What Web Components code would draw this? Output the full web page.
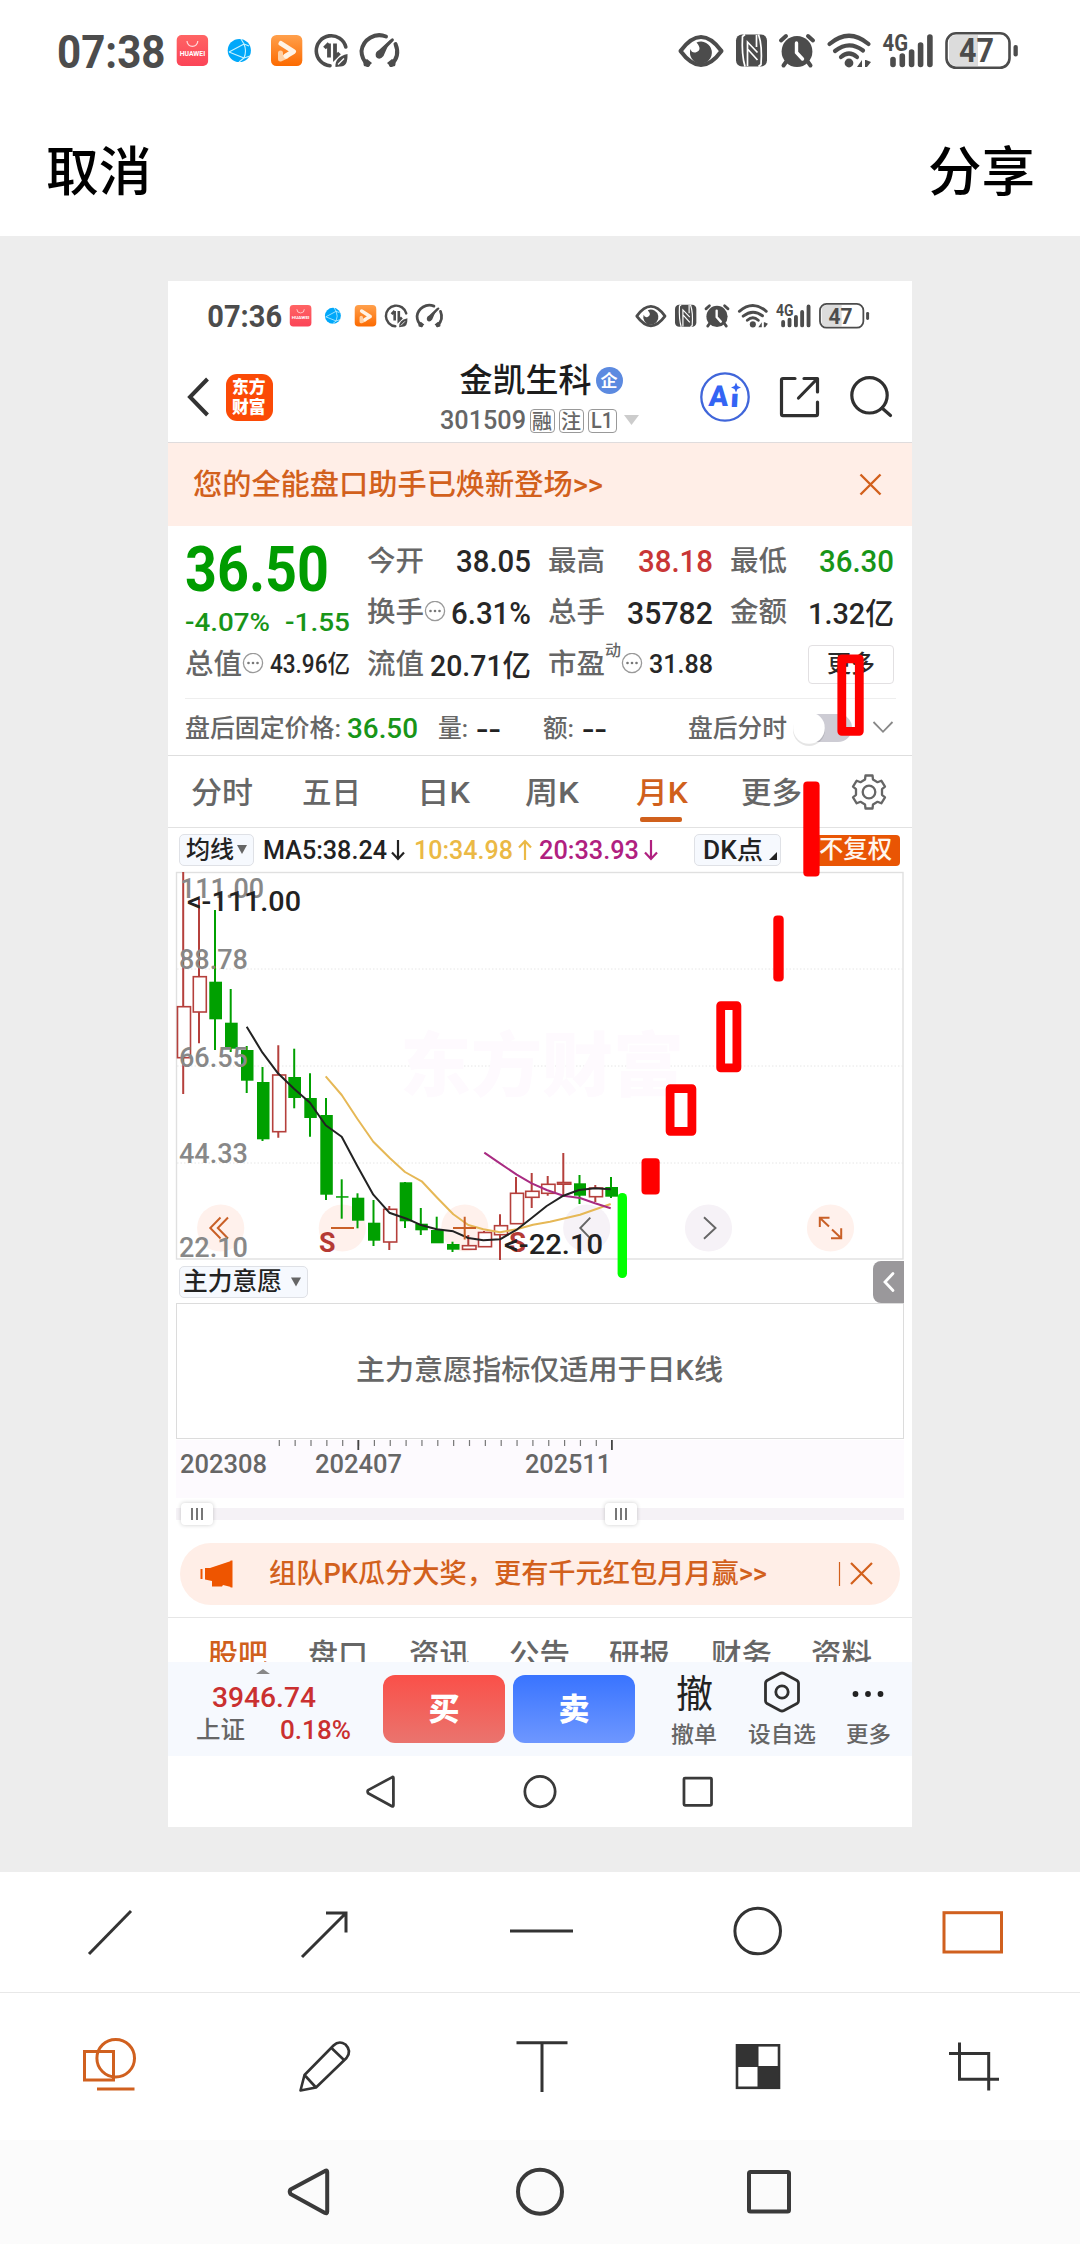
<!DOCTYPE html>
<html lang="zh-CN">
<head>
<meta charset="utf-8">
<title>截图编辑</title>
<style>
html,body{margin:0;padding:0;background:#ededed}
body{width:1080px;height:2244px;overflow:hidden;font-family:Roboto,"Noto Sans CJK SC",sans-serif;font-weight:500}
</style>
</head>
<body>
<shot-editor></shot-editor>
<script>
function define(name, html, after){
  const t=document.createElement('template'); t.innerHTML=html;
  customElements.define(name, class extends HTMLElement{
    constructor(){super(); this.attachShadow({mode:'open'}).appendChild(t.content.cloneNode(true));}
    connectedCallback(){ if(after) after.call(this,this.shadowRoot); }
  });
}

/* single line of text condensed or widened to w pixels; dy nudges the baseline */
define('fit-text', `<style>:host{display:block;flex:none;line-height:1.3;white-space:nowrap}span{display:inline-block;transform-origin:0 50%}</style><span><slot></slot></span>`,
function(r){
  const w=+this.getAttribute('w'), s=r.querySelector('span'), dy=this.getAttribute('dy')||'1.3';
  this.style.width=w+'px'; this.style.fontSize=this.getAttribute('s')+'px';
  s.style.transform='translateY('+dy+'px) scaleX('+(w/s.getBoundingClientRect().width)+')';
});

define('status-bar', `<style>:host{display:block}svg{display:block;width:100%;height:auto}</style>
<svg viewBox="0 0 1080 100" fill="#4c4c4c" font-family="Roboto,sans-serif">
<defs><linearGradient id="o" x2="0" y2="1"><stop stop-color="#ffa04c"/><stop offset="1" stop-color="#fc6a00"/></linearGradient>
<linearGradient id="h" x2="0" y2="1"><stop stop-color="#ff6464"/><stop offset="1" stop-color="#fb4457"/></linearGradient></defs>
<text class="t" x="57" y="67.5" font-size="45.5" font-weight="700" textLength="108.500" lengthAdjust="spacingAndGlyphs"></text>
<rect x="176.7" y="35" width="31.4" height="31" rx="5" fill="url(#h)"/>
<path d="M187 41a5.4 5.4 0 0 0 10.8 0" fill="none" stroke="#ffd9d9" stroke-width="1.2"/>
<text x="179.7" y="55.8" font-size="6.4" font-weight="700" fill="#fff" textLength="25.5" lengthAdjust="spacingAndGlyphs">HUAWEI</text>
<circle cx="239.3" cy="50.5" r="11.6" fill="#00a8fa"/>
<path d="M229 52L244 44Q247 51 244 58L229 52M244 44L241 39M244 58L239 62M244 44L249 46M244 58L250 56" fill="none" stroke="#c8f2ff" stroke-width="1.1"/>
<rect x="271" y="35" width="31.3" height="31" rx="5.5" fill="url(#o)"/>
<path d="M280.5 53V59L286 56.500" fill="none" stroke="#ffd0a4" stroke-width="5" stroke-linejoin="round" stroke-linecap="round"/>
<path d="M281 43.5L293.500 51.5L286 56" fill="none" stroke="#fff3e6" stroke-width="5" stroke-linejoin="round" stroke-linecap="round"/>
<g fill="none" stroke="#4c4c4c" stroke-width="3.6" stroke-linecap="round">
<path d="M345.8 47A15 15 0 1 0 330 65.7"/>
<path d="M329 43.5V57.5M329 43.5L324.5 48M335 43.5V57.5L339.5 53" stroke-width="3.8" stroke-linecap="butt"/>
<path d="M368 65Q361.5 59 361.5 51A18 18 0 0 1 386 36.5M395.5 44Q400.5 56 391 65" stroke-width="4"/>
<path d="M379.5 53L392.3 40" stroke-width="3.2"/></g>
<path d="M347.5 54Q348 67 340 66.5L335.5 67Q334.5 57 347.5 54zM391 39L383.5 56Q379.5 61 376 57Q374.5 52 379 50zM364 66Q362 62 367 59L372 63L368 67zM395 66Q397 62 392 59L387 63L391 67z"/>
<path d="M338 64.5L344 58.5" stroke="#fff" stroke-width="1.2"/>
<path d="M680.5 51Q701 23 721.5 51Q701 79 680.5 51z" fill="none" stroke="#4c4c4c" stroke-width="4" stroke-linejoin="round"/>
<path d="M696.5 42.5A11 11 0 1 1 690.5 49Q691.5 53 695.5 52.5Q703 50 696.5 42.5z"/>
<rect x="736" y="34.5" width="31" height="32" rx="6"/>
<path d="M745 66.500Q741.500 55 742.500 36.500L745 34.500M758.500 34.500Q762.500 46 761 64.500L758.500 66.500M747.500 66V42L757.500 52.500M756.500 35V47M748 49.500L757.500 60" fill="none" stroke="#fff" stroke-width="1.700"/>
<circle cx="797" cy="51.5" r="15.4"/>
<path d="M796.5 43V52.5L802.5 59" fill="none" stroke="#fff" stroke-width="3.4" stroke-linecap="round"/>
<path d="M781 40.5L786 36M813 40.5L808 36M786 62L783.5 65.5M808 62L810.5 65.5" stroke="#4c4c4c" stroke-width="4" stroke-linecap="round"/>
<g fill="none" stroke="#4c4c4c" stroke-width="4.2" stroke-linecap="round"><path d="M829.5 44Q849 27.5 868.5 44"/><path d="M835 51Q849 40 863 50.5"/><path d="M841 57Q849 50 857 57"/></g>
<circle cx="849" cy="63" r="4.4"/><path d="M862 60V67H857zM866 60L871 62L867 67H865V60z"/>
<text x="882.5" y="51" font-size="23" font-weight="700" textLength="25.5" lengthAdjust="spacingAndGlyphs">4G</text>
<g stroke="#4c4c4c" stroke-width="5.6" stroke-linecap="round"><path d="M893 59.5V64.5M902.3 56V64.5M911.6 52V64.5M920.6 45V64.5M929.9 37V64.5"/></g>
<path d="M956 35H978V66H956Q949 66 949 59V42Q949 35 956 35z" fill="#dcdcdc"/>
<rect x="946.5" y="33.3" width="63" height="34.5" rx="9.5" fill="none" stroke="#4c4c4c" stroke-width="2.6"/>
<rect x="1013.5" y="45" width="4.3" height="11.5" rx="2"/>
<text x="959" y="62" font-size="32.5" font-weight="700" textLength="35" lengthAdjust="spacingAndGlyphs">47</text>
</svg>`, function(r){r.querySelector('.t').textContent=this.getAttribute('time');});

define('nav-bar', `<style>:host{display:block}svg{display:block;width:100%;height:auto}</style>
<svg viewBox="0 0 1080 104" fill="none" stroke="#3a3a3a" stroke-width="4" stroke-linejoin="round">
<path d="M290.5 49.5Q289 51.5 290.5 54L325 73Q327.2 74 327.2 71.5V32Q327.2 29.5 325 31z"/><circle cx="540" cy="51.7" r="22"/><rect x="749" y="32" width="40" height="39.5" rx="1.5"/></svg>`);

define('app-header', `<style>:host{display:flex;height:93px;box-sizing:border-box;border-bottom:1.5px solid #dfdcdd}
svg{display:block;flex:none}.side{width:232px;display:flex;align-items:center;padding:2px 0 0 57.5px;box-sizing:border-box}
.logo{width:47px;height:47px;border-radius:11px;background:#fb4a06;color:#fff;font-weight:900;display:flex;flex-direction:column;align-items:center;justify-content:center;line-height:1}
.logo fit-text{line-height:20.5px}
.back{margin-left:-39px;margin-right:17px}
.mid{width:280px;display:flex;flex-direction:column;align-items:center}
.l1,.l2{display:flex;align-items:center}.l1{color:#1c1c1c;height:45px;margin:8px 0 0 2px;gap:4px}.l2{gap:4px;color:#666;height:32px;margin:1px 1px 0 0}
.ent{width:27px;height:27px;border-radius:50%;background:#5c8ae0;color:#fff;display:flex;align-items:center;justify-content:center;font-weight:700}
.tag{border:1.3px solid #999;border-radius:4px;height:22.5px;display:flex;align-items:center;justify-content:center;width:23px;margin-top:2px}
.tag.w{width:27px}</style>
<div class="side"><svg class="back" width="22" height="40" viewBox="0 0 22 40" fill="none" stroke="#333" stroke-width="4"><path d="M20.5 2L3 20L20.5 38"/></svg>
<div class="logo"><fit-text w="33.5" s="17" dy="0.3">东方</fit-text><fit-text w="33.5" s="17" dy="0.3">财富</fit-text></div></div>
<div class="mid"><div class="l1"><fit-text w="132" s="33">金凯生科</fit-text><div class="ent"><fit-text w="17" s="17" dy="0.5">企</fit-text></div></div>
<div class="l2"><fit-text w="86" s="25.5">301509</fit-text><div class="tag"><fit-text w="20" s="20" dy="0.5">融</fit-text></div><div class="tag"><fit-text w="20" s="20" dy="0.5">注</fit-text></div><div class="tag w"><fit-text w="22" s="22.5" dy="0.3">L1</fit-text></div>
<svg width="19" height="12"><path d="M3 1H18L10.5 11z" fill="#ccc"/></svg></div></div>
<svg width="232" height="91" viewBox="680 350 232 91" fill="none" stroke="#303030" stroke-width="3.2" stroke-linecap="round" stroke-linejoin="round">
<circle cx="725" cy="397" r="23.7" stroke="#4066da" stroke-width="2.3"/>
<g fill="#3464f4" stroke="none" font-family="Roboto,sans-serif" font-weight="900"><text x="708.5" y="406.5" font-size="29" textLength="19.5" lengthAdjust="spacingAndGlyphs" transform="skewX(-4) translate(28.3)">A</text><text x="730.5" y="406.8" font-size="25" textLength="9" lengthAdjust="spacingAndGlyphs" transform="skewX(-3) translate(20.5)">ı</text><path d="M736 382.5L737.5 386L741 387.5L737.5 389L736 392.5L734.5 389L731 387.5L734.5 386z"/></g>
<path d="M795 378.5H783Q781.5 378.5 781.5 380V414Q781.5 415.7 783 415.7H816Q817.5 415.7 817.5 414V402M804 378.5H817.5V392M817 379L798.5 398"/>
<circle cx="869.5" cy="395.3" r="17.7"/><path d="M882 408L890.5 415.5"/></svg>`);

define('info-icon', `<style>:host{display:block;flex:none}svg{display:block}</style><svg width="22" height="22" viewBox="0 0 22 22"><circle cx="11" cy="10" r="9.6" fill="none" stroke="#999" stroke-width="1.3"/><g fill="#777"><circle cx="6.5" cy="10" r="1.3"/><circle cx="11" cy="10" r="1.3"/><circle cx="15.5" cy="10" r="1.3"/></g></svg>`);

define('quote-panel', `<style>:host{display:block;height:230px;border-bottom:1.5px solid #dedede;box-sizing:border-box;color:#272727}
.g{display:grid;grid-template-columns:164.5px 164.5px 164.5px 164.5px;column-gap:17px;grid-template-rows:52px 51px 52px;padding:9px 16px 0 17px;height:155px}
.c{display:flex;align-items:center;justify-content:space-between}.c>:first-child{color:#666}
.p{grid-row:1/3;color:#009c00;display:flex;flex-direction:column}.p .big{font-weight:700;height:68px;margin-top:0;line-height:68px}.p .r{display:flex;justify-content:space-between;margin-top:1px;color:#189518;height:34px;align-items:center}
.k{display:flex;align-items:center;color:#666}.sup{margin:-28px 0 0 0}
.b{border:1px solid #e2e0e2;border-radius:4px;width:84px;height:37px;margin-left:auto;display:flex;align-items:center;justify-content:center;color:#2a2a2a!important}
.d{height:1px;background:#eee;margin:8px 16px 0 17px}
.f{display:flex;align-items:center;height:58px;padding-left:17px;color:#666}.gr{color:#189518}.rd{color:#c83636}
.dash{color:#222}svg{display:block;overflow:visible}</style>
<div class="g"><div class="p"><fit-text class="big" w="144" s="62.5">36.50</fit-text><div class="r"><fit-text w="85" s="26.5">-4.07%</fit-text><fit-text w="65" s="26.5">-1.55</fit-text></div></div>
<div class="c"><fit-text w="57" s="28">今开</fit-text><fit-text w="75" s="30.5">38.05</fit-text></div>
<div class="c"><fit-text w="57" s="28">最高</fit-text><fit-text class="rd" w="75" s="30.5">38.18</fit-text></div>
<div class="c"><fit-text w="57" s="28">最低</fit-text><fit-text class="gr" w="75" s="30.5">36.30</fit-text></div>
<div class="c"><div class="k"><fit-text w="57" s="28">换手</fit-text><info-icon></info-icon></div><fit-text w="80" s="30.5">6.31%</fit-text></div>
<div class="c"><fit-text w="57" s="28">总手</fit-text><fit-text w="86" s="30.5">35782</fit-text></div>
<div class="c"><fit-text w="57" s="28">金额</fit-text><fit-text w="86" s="30">1.32亿</fit-text></div>
<div class="c"><div class="k"><fit-text w="57" s="28">总值</fit-text><info-icon></info-icon></div><fit-text w="80" s="25">43.96亿</fit-text></div>
<div class="c"><fit-text w="57" s="28">流值</fit-text><fit-text w="101" s="30">20.71亿</fit-text></div>
<div class="c"><div class="k"><fit-text w="57" s="28">市盈</fit-text><fit-text class="sup" w="16" s="15.5">动</fit-text><info-icon></info-icon></div><fit-text w="64" s="25">31.88</fit-text></div>
<div class="c"><div class="b"><fit-text w="48" s="23.5" dy="0">更多</fit-text></div></div></div>
<div class="d"></div>
<div class="f"><fit-text w="156" s="24.5">盘后固定价格:</fit-text><fit-text class="gr" w="71" s="28" style="margin-left:6px">36.50</fit-text><fit-text w="30" s="24.5" style="margin-left:20px">量:</fit-text><fit-text class="dash" w="25" s="30" style="margin-left:8px">--</fit-text><fit-text w="31" s="24.5" style="margin-left:42px">额:</fit-text><fit-text class="dash" w="25" s="30" style="margin-left:8px">--</fit-text><fit-text w="99" s="24.5" style="margin-left:81px">盘后分时</fit-text>
<svg width="115" height="40" viewBox="790 708 115 40" style="margin-left:3px"><rect x="796" y="714" width="56" height="28" rx="14" fill="#cdccd4"/><circle cx="809" cy="730" r="16" fill="#000" opacity=".1"/><circle cx="809" cy="728" r="15.8" fill="#fff"/><path d="M873.5 722L883 731.8L892.5 722" fill="none" stroke="#888" stroke-width="1.8"/></svg></div>`);

define('period-tabs', `<style>:host{display:flex;height:72px;box-sizing:border-box;border-bottom:1.5px solid #e2e2e2;align-items:center;padding-left:23px;color:#666}
.on{color:#d0601c;position:relative}.on:after{content:"";position:absolute;left:4px;top:45px;width:42px;height:4.5px;border-radius:2px;background:#d0601c}svg{display:block;margin-left:48px}</style>
<fit-text w="62" s="30">分时</fit-text><fit-text w="59" s="30" style="margin-left:49px">五日</fit-text><fit-text w="53" s="30" style="margin-left:56px">日K</fit-text><fit-text w="54" s="30" style="margin-left:55px">周K</fit-text><fit-text class="on" w="52" s="30" style="margin-left:57px">月K</fit-text><fit-text w="61" s="30" style="margin-left:53px">更多</fit-text>
<svg width="38" height="38" viewBox="-19 -19 38 38" fill="none" stroke="#666" stroke-width="2.3" stroke-linejoin="round"><circle r="6.3"/><path d="M-4-12.5L-3.5-16.5H3.5L4-12.5L8.5-9.8L12.3-11.3L16-5.3L13-2.8V2.8L16 5.3L12.3 11.3L8.5 9.8L4 12.5L3.5 16.5H-3.5L-4 12.5L-8.5 9.8L-12.3 11.3L-16 5.3L-13 2.8V-2.8L-16-5.3L-12.3-11.3L-8.5-9.8z"/></svg>`);

define('pill-box', `<style>:host{display:flex;flex:none;align-items:center;box-sizing:border-box;height:32px;border:1px solid #dfe1e6;border-radius:5px;background:#f6f9fe;color:#222;padding-left:6px}</style><slot></slot>`);

define('ma-row', `<style>:host{display:flex;height:44px;align-items:center;padding-left:11px;color:#222}svg{display:block;flex:none}.n{background:#e95504;color:#fff6ee;height:31px;width:90px;border-radius:4px;display:flex;align-items:center;justify-content:flex-end;padding-right:8px;box-sizing:border-box;margin-left:29px}</style>
<pill-box style="width:75px"><fit-text w="48" s="24" dy="0.5">均线</fit-text><svg width="16" height="12"><path d="M3 1H13L8 10z" fill="#666"/></svg></pill-box>
<fit-text w="124" s="25.5" style="margin-left:9px">MA5:38.24</fit-text><svg width="18" height="26" viewBox="0 0 18 26" style="margin-left:3px" fill="none" stroke="#222" stroke-width="2.2"><path d="M8 3V22M2 15.5L8 22L14 15.5"/></svg>
<fit-text w="99" s="25.5" style="margin-left:6px;color:#ebb945">10:34.98</fit-text><svg width="18" height="26" viewBox="0 0 18 26" style="margin-left:4px" fill="none" stroke="#ebb945" stroke-width="2.2"><path d="M8 4V23M2 10.5L8 4L14 10.5"/></svg>
<fit-text w="100" s="25.5" style="margin-left:4px;color:#b0207f">20:33.93</fit-text><svg width="18" height="26" viewBox="0 0 18 26" style="margin-left:4px" fill="none" stroke="#b0207f" stroke-width="2.2"><path d="M8 3V22M2 15.5L8 22L14 15.5"/></svg>
<pill-box style="width:87px;margin-left:33px;padding-left:8px"><fit-text w="60" s="25" dy="0.5">DK点</fit-text><svg width="16" height="30"><path d="M14 17V25H6z" fill="#222"/></svg></pill-box>
<div class="n"><fit-text w="73" s="24.5" dy="0.3">不复权</fit-text></div>`);

const G='#00a000', R='#b5403c';
/* kind, body x, width, top, bottom, wick x, wick top, wick bottom */
const candles=[['r',177.5,13,1006.7,1057.7,183.2,872,1094],['r',193.3,13,976.7,1012,199,899,1043.3],['g',209.3,12.7,981.7,1019.3,215,910,1050],['g',225,12.7,1022.7,1048.7,230.7,989,1052],['g',241,12.5,1050,1080.7,246.7,1046,1093],['g',257,12.5,1082,1139.3,262.5,1067,1141],['r',272.7,13,1075,1131.7,278.3,1045.3,1137.7],['g',288.3,12.7,1077,1098,294.2,1048.7,1108.3],['g',304.3,12.5,1098,1118,310,1073.3,1136.7],['g',320.3,12.5,1115,1194.7,326,1098,1200],['g',336,12.5,1196.2,1197.7,341.7,1179.3,1218.7],['g',352,12.3,1197.7,1220.7,357.5,1193.3,1228.3],['g',368,12.3,1222.7,1240.7,373.5,1200,1246],['r',383.7,13,1209.3,1242,389.3,1206,1250],['g',399.7,12.5,1182.3,1221.3,405,1182,1228],['g',415.3,12.5,1223.7,1230.3,420.8,1208,1235],['g',431,12.7,1230,1243.3,436.7,1216.7,1243],['g',447,12.5,1244,1249.7,452.5,1241.7,1252],['r',462.5,13.5,1245.7,1249.3,468.3,1235,1246],['r',478.5,13,1232.5,1246.7,484,1231,1232],['r',494.5,13,1225.7,1234.7,500,1214.3,1260],['r',510.5,13,1193.3,1223.7,516,1177,1224],['r',525.7,13.3,1191.3,1197.3,531.7,1173,1208],['r',541.7,13.3,1184.3,1193.3,547.7,1176,1195.7],['r',557.5,13.3,1182.5,1184.2,563.3,1153,1195],['g',574,12,1183.3,1195.7,579.5,1175,1204],['r',589.5,13,1188,1196.7,595.3,1185,1202],['g',605.3,12.7,1187,1196.7,611,1177,1198]];
const candleSvg=candles.map(c=>{const [k,x,w,t,b,wx,wt,wb]=c;
  if(k==='g')return `<path d="M${wx} ${wt}V${wb}" stroke="${G}" stroke-width="2"/><rect x="${x}" y="${t}" width="${w}" height="${b-t}" fill="${G}"/>`;
  return `<path d="M${wx} ${wt}V${t}M${wx} ${b}V${wb}" stroke="${R}" stroke-width="2"/><rect x="${x}" y="${t}" width="${w}" height="${b-t}" fill="#fff" stroke="${R}" stroke-width="1.6"/>`;}).join('');

define('k-chart', `<style>:host{display:block;height:387px}svg{display:block;overflow:visible}</style>
<svg width="744" height="387" viewBox="168 872 744 387" font-family='Roboto,"Noto Sans CJK SC",sans-serif' font-weight="500">
<rect x="176.5" y="872.5" width="726.5" height="386.5" fill="none" stroke="#e0e0e0" stroke-width="1.4"/>
<path d="M177 969H903M177 1066H903M177 1163H903" stroke="#e6e6e6" stroke-dasharray="1.5 2"/>
<text x="400" y="1091" font-size="70" font-weight="900" fill="#fefafe" textLength="284" lengthAdjust="spacingAndGlyphs">东方财富</text>
<g fill="#fff1ec"><circle cx="220.7" cy="1228" r="23.6"/><circle cx="342.3" cy="1228" r="23.6"/><circle cx="464.8" cy="1228" r="23.6"/><circle cx="830.5" cy="1228" r="23.6"/></g>
<g fill="#f6f2f7"><circle cx="586.7" cy="1228" r="23.6"/><circle cx="708.5" cy="1228" r="23.6"/></g>
${candleSvg}
<g fill="none" stroke-width="2" stroke-linejoin="round">
<polyline stroke="#e6b856" points="325.7,1076.3 341.7,1095 357.3,1118.7 373.3,1141.7 390,1158.3 405,1172 421.7,1181.3 436.7,1197.3 453.3,1214.3 468.3,1225 483.3,1229.3 500,1232.3 516.7,1229.3 533,1224.7 550,1221.7 580,1214.7 610.7,1204"/>
<polyline stroke="#a92b82" points="484.3,1152.7 500,1163.3 516.7,1174.7 531.7,1183.3 546.7,1190 563.3,1195.7 580,1198 595,1203.3 610.7,1208.3"/>
<polyline stroke="#222" points="246.7,1026.7 262.5,1052.7 278,1073.3 294,1088.7 310,1102.7 325.7,1125.3 341.7,1136.7 357.3,1166 373.3,1194.7 389.3,1212.7 406.7,1218.7 420,1224.7 436.7,1229.3 453.3,1231.3 468.3,1238 483.3,1240.3 500,1239.3 517.3,1229.3 531.7,1218 546.7,1206 563.3,1195.7 579,1190 595,1188.3 610.7,1189.3"/></g>
<g fill="none" stroke="#c96027" stroke-width="2"><path d="M220.5 1217.5L210.3 1228L220.5 1238.5M228 1217.5L217.8 1228L228 1238.5M331 1228H354M453 1228H476M464.7 1216.7V1239.5"/><path d="M819.8 1227V1217.8H829.5M820 1218L829 1226.5M841.2 1228.3V1238.3H831M841 1238L832 1229.5"/></g>
<g fill="none" stroke="#666" stroke-width="1.9"><path d="M590.3 1217.7L580.3 1228L590.3 1238.3M704 1217.3L715.5 1228L704 1238.7"/></g>
<g fill="#888" font-size="27.5"><text x="180" y="898" textLength="84" lengthAdjust="spacingAndGlyphs">111.00</text><text x="179" y="969" textLength="69" lengthAdjust="spacingAndGlyphs">88.78</text><text x="179" y="1067" textLength="69" lengthAdjust="spacingAndGlyphs">66.55</text><text x="179" y="1163" textLength="69" lengthAdjust="spacingAndGlyphs">44.33</text><text x="179" y="1257" textLength="69" lengthAdjust="spacingAndGlyphs">22.10</text></g>
<g fill="#b53a34" font-size="28" font-weight="700"><text x="319" y="1252" textLength="16.5" lengthAdjust="spacingAndGlyphs">S</text><text x="509" y="1252" textLength="17" lengthAdjust="spacingAndGlyphs">S</text></g>
<g fill="#222" font-size="27.5"><text x="187" y="910.5" textLength="114" lengthAdjust="spacingAndGlyphs">&lt;-111.00</text><text x="504" y="1253.7" textLength="99" lengthAdjust="spacingAndGlyphs">&lt;-22.10</text></g>
</svg>`);

define('sub-chart', `<style>:host{display:block}.t{display:flex;height:44px;align-items:center;padding:1px 8px 0 11px;box-sizing:border-box;justify-content:space-between}
.c{width:31px;height:42px;background:#9a989b;border-radius:8px 0 0 8px;display:flex;align-items:center;justify-content:center}
svg{display:block;flex:none}.b{margin:0 8px;height:135.5px;box-sizing:border-box;border:1.4px solid #dcdcdc;display:flex;align-items:center;justify-content:center;color:#666}
.a{margin:1px 8px 0;height:58.5px;background:#fdfafe;color:#666}.l{display:flex;padding-left:4px;height:26px;align-items:center;margin-top:-2px}
.s{height:22px;margin:5px 8px 0;display:flex;align-items:center;background:linear-gradient(#f5f2f6,#f5f2f6) 0 50%/100% 12px no-repeat;border-radius:6px}
.h{width:32px;height:22px;background:#fff;border-radius:4px;box-shadow:0 0 4px #0003;display:flex;justify-content:center;align-items:center;gap:3.5px}.h i{width:1.5px;height:12px;background:#777}</style>
<div class="t"><pill-box style="width:129px;padding-left:3px"><fit-text w="99" s="24.5" dy="0.3">主力意愿</fit-text><svg width="20" height="12"><path d="M9 1.5H19L14 10.5z" fill="#666"/></svg></pill-box><div class="c"><svg width="14" height="22" viewBox="0 0 14 22" fill="none" stroke="#fff" stroke-width="2.8" stroke-linecap="round"><path d="M11 2.5L3 11L11 19.5"/></svg></div></div>
<div class="b"><fit-text w="367" s="28.5" dy="0.3" style="margin-right:2px">主力意愿指标仅适用于日K线</fit-text></div>
<div class="a"><svg width="728" height="14" viewBox="176 1440 728 14"><path class="tk" stroke="#777" stroke-width="1.2"/><path d="M358.3 1440V1450M611.9 1440V1450" stroke="#444" stroke-width="1.8"/></svg>
<div class="l"><fit-text w="87" s="25">202308</fit-text><fit-text w="87" s="25" style="margin-left:48px">202407</fit-text><fit-text w="86" s="25" style="margin-left:123px">202511</fit-text></div></div>
<div class="s"><div class="h" style="margin-left:5px"><i></i><i></i><i></i></div><div class="h" style="margin-left:392px"><i></i><i></i><i></i></div></div>`,
function(r){let d='';for(let i=0;i<21;i++)d+='M'+(279.3+i*15.85)+' 1440V1446';r.querySelector('.tk').setAttribute('d',d);});

define('promo-strip', `<style>:host{display:flex;align-items:center;background:#ffeee7;color:#d2601c}</style><slot></slot>`);

define('trade-bar', `<style>:host{display:flex;height:94px;background:#f6f9fe;color:#666;box-sizing:border-box}
svg{display:block}.i{width:215px;color:#ca3030;display:flex;flex-direction:column;padding-top:6px;box-sizing:border-box}
.r{display:flex;align-items:center}.b{width:122px;height:68px;border-radius:12px;margin-top:13px;display:flex;align-items:center;justify-content:center;color:#fff;font-weight:900}
.buy{background:linear-gradient(#fa5049,#ea746e)}.sell{background:linear-gradient(#3974ff,#6e97ff);margin-left:8px}
.c{display:flex;flex-direction:column;align-items:center}.ic{height:60px;display:flex;align-items:center;color:#222;font-weight:400}.c>fit-text{line-height:24px}</style>
<div class="i"><svg width="16" height="7" style="margin-left:87px"><path d="M1 6L8 1L15 6z" fill="#888"/></svg><fit-text w="104" s="27.5" style="margin:4px 0 0 44px">3946.74</fit-text><div class="r" style="margin:-2px 0 0 28px;height:34px"><fit-text w="49" s="24" style="color:#666">上证</fit-text><fit-text w="71" s="26" style="margin-left:35px">0.18%</fit-text></div></div>
<div class="b buy"><fit-text w="31" s="31">买</fit-text></div><div class="b sell"><fit-text w="31" s="31">卖</fit-text></div>
<div class="c" style="width:50px;margin-left:34px"><div class="ic"><fit-text w="37" s="38" dy="3">撤</fit-text></div><fit-text w="46" s="22" dy="0.5">撤单</fit-text></div>
<div class="c" style="width:70px;margin-left:28px"><div class="ic"><svg width="40" height="44" viewBox="0 0 40 44" fill="none" stroke="#303030" stroke-width="2.8" stroke-linejoin="round"><path d="M18 3.5Q20 2.5 22 3.5L35 10.5Q36.5 11.5 36.5 13V31Q36.5 32.5 35 33.5L22 40.5Q20 41.5 18 40.5L5 33.5Q3.5 32.5 3.5 31V13Q3.5 11.5 5 10.5z"/><circle cx="20" cy="22" r="6.2"/></svg></div><fit-text w="68" s="22" dy="0.5">设自选</fit-text></div>
<div class="c" style="width:46px;margin-left:28px"><div class="ic"><svg width="34" height="10"><g fill="#222"><circle cx="4.500" cy="7" r="2.9"/><circle cx="17" cy="7" r="2.9"/><circle cx="29.5" cy="7" r="2.9"/></g></svg></div><fit-text w="45" s="22" dy="0.5">更多</fit-text></div>`);

define('stock-screen', `<style>:host{display:flex;flex-direction:column;position:relative;width:744px;height:1546px;background:#fff;overflow:hidden}
:host>*{flex:none}status-bar,nav-bar{height:69px}.w{display:flex;height:45px;margin-top:12px;border-top:1px solid #e6e6e6;overflow:hidden;box-sizing:border-box;color:#666;padding:15.5px 0 0 40px}
.ann{position:absolute;left:0;top:0}svg{display:block}</style>
<status-bar time="07:36"></status-bar>
<app-header></app-header>
<promo-strip style="height:83px"><fit-text w="410" s="29" style="margin-left:25px">您的全能盘口助手已焕新登场&gt;&gt;</fit-text><svg width="24" height="24" style="margin-left:255px" stroke="#d2601c" stroke-width="2.4"><path d="M2.500 1.5L22.5 21.5M22.5 1.5L2.5 21.5"/></svg></promo-strip>
<quote-panel></quote-panel>
<period-tabs></period-tabs>
<ma-row></ma-row>
<k-chart></k-chart>
<sub-chart></sub-chart>
<promo-strip style="height:62px;margin:18px 12px 0;border-radius:31px"><svg width="34" height="30" viewBox="0 0 34 30" style="margin-left:20px" fill="#ee5500"><path d="M1.5 10V20" stroke="#ee5500" stroke-width="2"/><path d="M5 9H10L31 2V28L23 26L22 27.5H12V22L5 20.5z"/><path d="M31.5 1.5V28.5" stroke="#ee5500" stroke-width="2"/></svg><fit-text w="498" s="27" style="margin-left:35px">组队PK瓜分大奖，更有千元红包月月赢&gt;&gt;</fit-text><svg width="36" height="26" style="margin-left:71px" fill="none" stroke="#d2601c" stroke-width="2.2"><path d="M1.5 1V25" stroke-width="1.2"/><path d="M13 2L34 23M34 2L13 23"/></svg></promo-strip>
<div class="w"><fit-text w="60" s="30" style="color:#d0601c">股吧</fit-text><fit-text w="60" s="30" style="margin-left:40px">盘口</fit-text><fit-text w="61" s="30" style="margin-left:41px">资讯</fit-text><fit-text w="61" s="30" style="margin-left:39px">公告</fit-text><fit-text w="61" s="30" style="margin-left:39px">研报</fit-text><fit-text w="61" s="30" style="margin-left:41px">财务</fit-text><fit-text w="61" s="30" style="margin-left:39px">资料</fit-text></div>
<trade-bar></trade-bar>
<nav-bar></nav-bar>
<svg class="ann" width="744" height="1546" viewBox="168 281 744 1546"><g fill="none" stroke="#f00" stroke-width="8.8" stroke-linejoin="round"><rect x="841.8" y="658.8" width="17.5" height="72.5"/><rect x="720.7" y="1005.7" width="16.2" height="62.2"/><rect x="670.1" y="1088.7" width="21.8" height="42.6"/></g>
<g fill="#f00"><rect x="803.3" y="781.5" width="16.3" height="95" rx="4"/><rect x="773.3" y="915.5" width="10.4" height="66" rx="4"/><rect x="641.5" y="1158.3" width="18.2" height="36.2" rx="4"/></g><rect x="617.6" y="1193" width="9.4" height="85" rx="4.5" fill="#0f0"/></svg>`);

define('tool-row', `<style>:host{display:grid;grid-template-columns:repeat(5,216px);background:#fff}</style><slot></slot>`);

define('shot-editor', `<style>:host{display:flex;flex-direction:column;width:1080px;height:2244px;background:#ededed}:host>*{flex:none}
.top{background:#fff;height:236px}.act{display:flex;justify-content:space-between;padding:0 45px 0 45.5px;height:136px;align-items:center;color:#000}
.stage{height:1636px;display:flex;justify-content:center;padding-top:45px;box-sizing:border-box}
svg{display:block}tool-row svg{fill:none;stroke:#333;stroke-width:3}tool-row svg.o{stroke:#d0601f}nav-bar{background:#fbfbfb}</style>
<div class="top"><status-bar time="07:38"></status-bar><div class="act"><fit-text w="105.500" s="53" dy="5">取消</fit-text><fit-text w="107" s="53" dy="5">分享</fit-text></div></div>
<div class="stage"><stock-screen></stock-screen></div>
<tool-row style="height:121px;border-bottom:1px solid #e8e8e8;box-sizing:border-box">
<svg width="216" height="120" viewBox="0 1872 216 120"><path d="M89 1954L131 1911"/></svg>
<svg width="216" height="120" viewBox="216 1872 216 120"><path d="M302 1957L345.5 1913.5M326 1913H346V1932.5"/></svg>
<svg width="216" height="120" viewBox="432 1872 216 120"><path d="M510 1931H573"/></svg>
<svg width="216" height="120" viewBox="648 1872 216 120"><circle cx="757.7" cy="1931" r="22.8"/></svg>
<svg class="o" width="216" height="120" viewBox="864 1872 216 120"><rect x="944" y="1912.7" width="57.5" height="39.3"/></svg></tool-row>
<tool-row style="height:147px">
<svg class="o" width="216" height="147" viewBox="0 1993 216 147"><rect x="84.5" y="2051.5" width="29" height="28.5"/><circle cx="115.7" cy="2058.2" r="18.8"/><path d="M97 2089H134.5"/></svg>
<svg width="216" height="147" viewBox="216 1993 216 147" stroke-linejoin="round" style="stroke-width:2.6"><path d="M300.5 2090.5L304.5 2075L333.5 2045.5Q339 2040 345.5 2044.5Q352 2051 346.5 2058L316 2087.5zM304.5 2075L316 2087.5M331.5 2048L344 2060"/></svg>
<svg width="216" height="147" viewBox="432 1993 216 147"><path d="M516.5 2042.7H567.5M542 2043V2092"/></svg>
<svg width="216" height="147" viewBox="648 1993 216 147"><rect x="737" y="2045.3" width="42" height="42.5" style="stroke-width:2.6"/><path d="M737 2045H758V2066.5H737zM758 2066.5H779V2088H758z" fill="#333" style="stroke-width:1"/></svg>
<svg width="216" height="147" viewBox="864 1993 216 147"><path d="M959.5 2042.5V2079.3H999M949 2053.5H988.7V2090.5"/></svg></tool-row>
<nav-bar></nav-bar>`);
</script>
</body>
</html>
